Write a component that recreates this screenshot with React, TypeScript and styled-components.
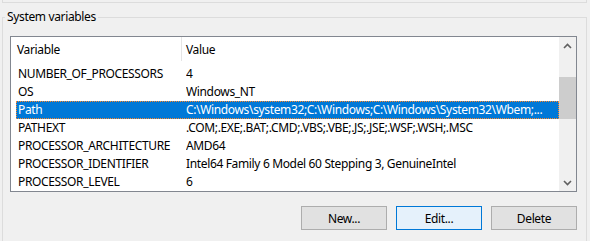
import React from 'react'
import styled, { createGlobalStyle } from 'styled-components'

const GlobalStyle = createGlobalStyle`
	html, body {
		margin: 0;
		padding: 0;
		background: #f0f0f0;
	}
	body {
		font-family: 'Noto Sans', 'Liberation Sans', sans-serif;
		font-size: 12px;
		letter-spacing: -0.35px;
		color: #000;
	}
`

const Window = styled.div`
	width: 590px;
	height: 241px;
	overflow: hidden;
`

const PrevGroupEdge = styled.div`
	height: 2px;
	margin: 0 3px 0 2px;
	border: 1px solid #dcdcdc;
	border-top: none;
`

const GroupBox = styled.fieldset`
	margin: 6px 3px 0 2px;
	padding: 11px 0 0 7px;
	border: 1px solid #dcdcdc;
	min-width: 0;
	height: 260px;
`

const Legend = styled.legend`
	margin-left: -5px;
	padding: 0 2px;
	line-height: 16px;
`

const ListView = styled.div`
	display: flex;
	box-sizing: border-box;
	width: 567px;
	height: 156px;
	border: 1px solid #828790;
	background: #fff;
`

const Table = styled.div`
	flex: 1;
	min-width: 0;
	overflow: hidden;
`

const Header = styled.div`
	display: flex;
	height: 24px;
	margin-bottom: 4px;
`

const HeaderCell = styled.div<{ width?: number }>`
	box-sizing: border-box;
	${props => props.width ? `width: ${props.width}px; border-right: 1px solid #e5e5e5;` : 'flex: 1;'}
	padding-left: ${props => props.width ? 6 : 4}px;
	line-height: 25px;
`

const Row = styled.div<{ selected?: boolean }>`
	display: flex;
	height: 18px;
	margin-left: 5px;
	line-height: 18px;
	white-space: nowrap;
	background: ${props => props.selected ? '#0078d7' : 'transparent'};
	color: ${props => props.selected ? '#fff' : '#000'};
	outline: ${props => props.selected ? '1px dotted #ff8728' : 'none'};
	outline-offset: -1px;
`

const NameCell = styled.div`
	box-sizing: border-box;
	width: 170px;
	padding-left: 2px;
	overflow: hidden;
`

const ValueCell = styled.div`
	flex: 1;
	overflow: hidden;
`

const ScrollBar = styled.div`
	display: flex;
	flex-direction: column;
	width: 17px;
	background: #f0f0f0;
`

const ArrowButton = styled.div`
	display: flex;
	align-items: center;
	justify-content: center;
	height: 17px;
`

const Track = styled.div`
	flex: 1;
`

const Thumb = styled.div<{ offset: number; size: number }>`
	margin-top: ${props => props.offset}px;
	height: ${props => props.size}px;
	background: #cdcdcd;
`

const ButtonRow = styled.div`
	display: flex;
	justify-content: flex-end;
	gap: 9px;
	width: 567px;
	margin-top: 14px;
`

const Button = styled.button<{ focused?: boolean }>`
	box-sizing: border-box;
	width: 86px;
	height: 24px;
	padding: 0;
	font: inherit;
	letter-spacing: inherit;
	color: #000;
	background: ${props => props.focused ? '#e5f1fb' : '#e1e1e1'};
	border: 1px solid ${props => props.focused ? '#0078d7' : '#adadad'};
`

const Chevron: React.FC<{ down?: boolean }> = ({ down }) => (
	<svg width='9' height='6' viewBox='0 0 9 6'>
		<polyline
			points={down ? '1,1 4.5,4.5 8,1' : '1,5 4.5,1.5 8,5'}
			fill='none'
			stroke='#606060'
			strokeWidth='1.6'
		/>
	</svg>
)

const variables = [
	{ name: 'NUMBER_OF_PROCESSORS', value: '4' },
	{ name: 'OS', value: 'Windows_NT' },
	{ name: 'Path', value: 'C:\\Windows\\system32;C:\\Windows;C:\\Windows\\System32\\Wbem;...' },
	{ name: 'PATHEXT', value: '.COM;.EXE;.BAT;.CMD;.VBS;.VBE;.JS;.JSE;.WSF;.WSH;.MSC' },
	{ name: 'PROCESSOR_ARCHITECTURE', value: 'AMD64' },
	{ name: 'PROCESSOR_IDENTIFIER', value: 'Intel64 Family 6 Model 60 Stepping 3, GenuineIntel' },
	{ name: 'PROCESSOR_LEVEL', value: '6' }
]

const App: React.FC = () => {

	const selected = 'Path'

	return (
		<Window>
			<GlobalStyle />

			<PrevGroupEdge />

			<GroupBox>
				<Legend>System variables</Legend>

				<ListView>
					<Table>
						<Header>
							<HeaderCell width={171}>Variable</HeaderCell>
							<HeaderCell>Value</HeaderCell>
						</Header>
						{variables.map(variable => (
							<Row key={variable.name} selected={variable.name === selected}>
								<NameCell>{variable.name}</NameCell>
								<ValueCell>{variable.value}</ValueCell>
							</Row>
						))}
					</Table>
					<ScrollBar>
						<ArrowButton><Chevron /></ArrowButton>
						<Track>
							<Thumb offset={23} size={42} />
						</Track>
						<ArrowButton><Chevron down /></ArrowButton>
					</ScrollBar>
				</ListView>

				<ButtonRow>
					<Button>New...</Button>
					<Button focused>Edit...</Button>
					<Button>Delete</Button>
				</ButtonRow>
			</GroupBox>

		</Window>
	)
}

export default App
